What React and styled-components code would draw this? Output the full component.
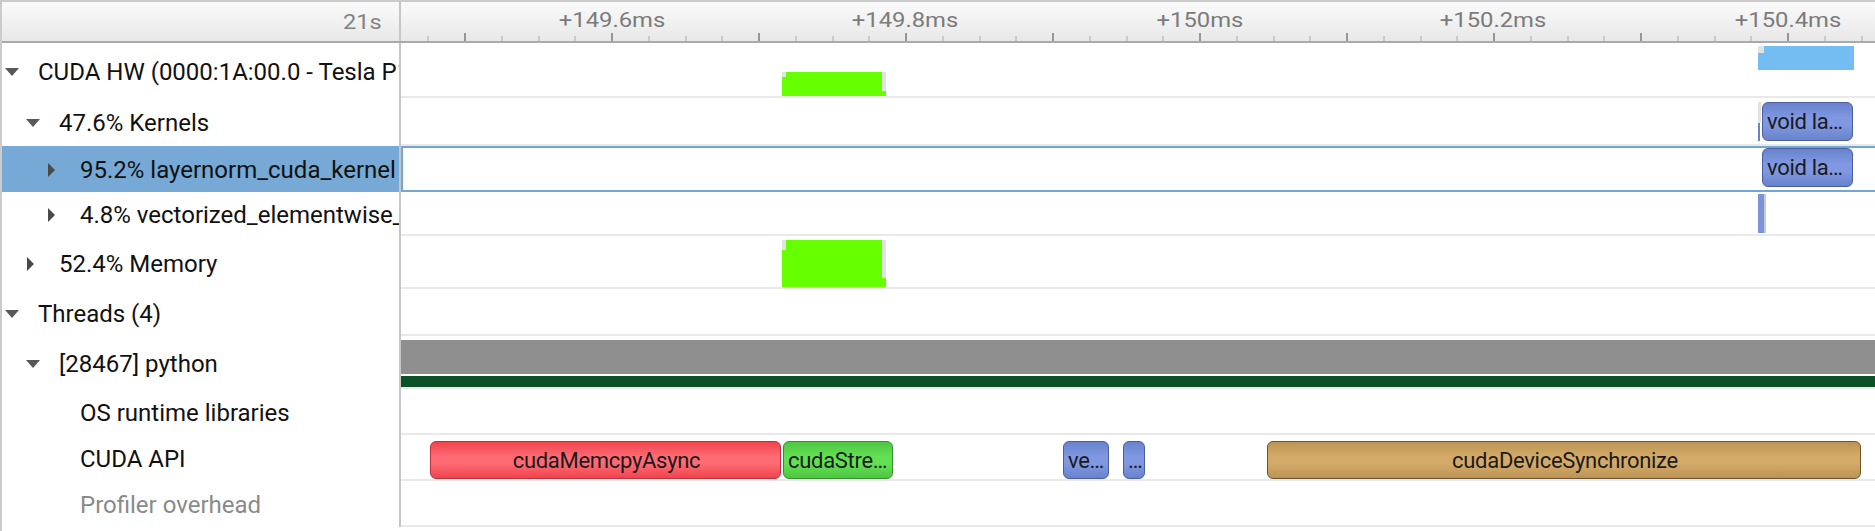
import React from "react";
import styled, { createGlobalStyle, css } from "styled-components";

const GlobalStyle = createGlobalStyle`
  html, body {
    margin: 0;
    padding: 0;
    background: #fff;
  }
  body {
    font-family: Roboto, "Noto Sans", sans-serif;
  }
`;

// track canvas starts here (absolute page x)
const TRACK_X = 401;
const px = (abs) => abs - TRACK_X;

const Frame = styled.div`
  width: 1875px;
  height: 531px;
  box-sizing: border-box;
  border-top: 2px solid #cbcbcb;
  border-left: 2px solid #cbcbcb;
  overflow: hidden;
  display: flex;
  flex-direction: column;
`;

const HeaderRow = styled.div`
  display: grid;
  grid-template-columns: 399px 1fr;
  height: 41px;
  flex-shrink: 0;
  box-sizing: border-box;
  border-bottom: 2px solid #a9a9a9;
  background: linear-gradient(#fafafa, #e8e8e8);
`;

const Corner = styled.div`
  display: flex;
  align-items: center;
  justify-content: flex-end;
  padding-right: 17px;
  border-right: 2px solid #c6c6c6;
  color: #838383;
  font-size: 20px;

  span {
    display: inline-block;
    transform: scaleX(1.18);
    transform-origin: right center;
  }
`;

const Ruler = styled.div`
  position: relative;
  overflow: hidden;
`;

const Tick = styled.div`
  position: absolute;
  bottom: 0;
  width: 2px;
  height: ${(p) => (p.$major ? 8 : 5)}px;
  background: ${(p) => (p.$major ? "#979797" : "#cacaca")};
`;

const TimeLabel = styled.div`
  position: absolute;
  top: 8px;
  font-size: 20px;
  line-height: 20px;
  color: #7b7b7b;
  white-space: nowrap;
  transform: translateX(-50%) scaleX(1.19);
`;

const Row = styled.div`
  display: grid;
  grid-template-columns: 399px 1fr;
  height: ${(p) => p.$h}px;
  flex-shrink: 0;
`;

const Label = styled.div`
  display: flex;
  align-items: center;
  box-sizing: border-box;
  padding-left: ${(p) => 3 + p.$level * 21}px;
  padding-top: 2px;
  border-right: 2px solid #c6c6c6;
  background: ${(p) => (p.$selected ? "#76a9d5" : "#fff")};
  color: ${(p) => (p.$muted ? "#8a8a8a" : "#111")};
  font-size: 24px;
  white-space: nowrap;
  overflow: hidden;
`;

const ArrowSlot = styled.span`
  width: 33px;
  flex-shrink: 0;
  display: flex;
  align-items: center;
`;

const Tri = styled.span`
  width: 0;
  height: 0;
  ${(p) =>
    p.$dir === "down"
      ? css`
          border-left: 7.5px solid transparent;
          border-right: 7.5px solid transparent;
          border-top: 8px solid #585858;
        `
      : css`
          margin-left: 1px;
          border-top: 7px solid transparent;
          border-bottom: 7px solid transparent;
          border-left: 7px solid #4a4a4a;
        `}
`;

const Track = styled.div`
  position: relative;
  overflow: hidden;
  box-sizing: border-box;
  ${(p) =>
    p.$selected
      ? css`
          box-shadow: inset 2px 2px 0 #72a6d3, inset 0 -2px 0 #72a6d3;
        `
      : css`
          border-bottom: 2px solid #e9e9e9;
        `}
`;

const Bar = styled.div`
  position: absolute;
  background: ${(p) => p.$color};
`;

const tones = {
  red: { light: "#ff6b73", dark: "#f0434d", border: "#b8333b" },
  green: { light: "#63e053", dark: "#4dc641", border: "#3a8e30" },
  blue: { light: "#7f98e1", dark: "#6882cc", border: "#4b5fa0" },
  gold: { light: "#d4aa68", dark: "#bb9453", border: "#6d5430" },
};

const Slice = styled.div`
  position: absolute;
  box-sizing: border-box;
  padding: 0 2px 0 4px;
  border: 1px solid ${(p) => tones[p.$tone].border};
  border-radius: 6px;
  background: linear-gradient(
    to bottom,
    ${(p) => tones[p.$tone].dark} 0%,
    ${(p) => tones[p.$tone].light} 40%,
    ${(p) => tones[p.$tone].light} 60%,
    ${(p) => tones[p.$tone].dark} 100%
  );
  color: #1a1a20;
  font-size: 22px;
  letter-spacing: -0.3px;
  white-space: nowrap;
  overflow: hidden;
  display: flex;
  align-items: center;
  justify-content: ${(p) => (p.$fits ? "center" : "flex-start")};

  span {
    overflow: hidden;
    text-overflow: ellipsis;
  }
`;

const GREY = "#e2e2e2";
const LIME = "#66ff00";

const gpuBlock = (top, h) => [
  { kind: "bar", color: GREY, l: 782, r: 886, top, h },
  { kind: "bar", color: LIME, l: 786, r: 882, top, h },
  { kind: "bar", color: LIME, l: 782, r: 786, top: top + Math.round(h * 0.2), h: h - Math.round(h * 0.2) },
  { kind: "bar", color: LIME, l: 882, r: 886, top: top + h - Math.round(h * 0.2), h: Math.round(h * 0.2) },
];

const rows = [
  {
    h: 55,
    level: 0,
    arrow: "down",
    label: "CUDA HW (0000:1A:00.0 - Tesla P100-PCIE-16GB)",
    items: [
      ...gpuBlock(29, 24),
      { kind: "bar", color: GREY, l: 1758, r: 1764, top: 3, h: 7 },
      { kind: "bar", color: "#74bdf2", l: 1764, r: 1854, top: 3, h: 24 },
      { kind: "bar", color: "#74bdf2", l: 1758, r: 1764, top: 10, h: 17 },
    ],
  },
  {
    h: 48,
    level: 1,
    arrow: "down",
    label: "47.6% Kernels",
    items: [
      { kind: "bar", color: GREY, l: 1758, r: 1761, top: 4, h: 21 },
      { kind: "bar", color: "#6b83c8", l: 1758, r: 1760, top: 25, h: 18 },
      { kind: "slice", tone: "blue", l: 1762, r: 1853, top: 4, h: 39, text: "void layer_norm_kernel" },
    ],
  },
  {
    h: 46,
    level: 2,
    arrow: "right",
    selected: true,
    label: "95.2% layernorm_cuda_kernel",
    items: [
      { kind: "slice", tone: "blue", l: 1762, r: 1853, top: 2, h: 39, text: "void layer_norm_kernel" },
    ],
  },
  {
    h: 44,
    level: 2,
    arrow: "right",
    label: "4.8% vectorized_elementwise_kernel",
    items: [
      { kind: "bar", color: "#7b93d9", l: 1758, r: 1764, top: 2, h: 39 },
      { kind: "bar", color: "#c9c9c9", l: 1764, r: 1766, top: 2, h: 39 },
    ],
  },
  {
    h: 53,
    level: 1,
    arrow: "right",
    label: "52.4% Memory",
    items: gpuBlock(4, 48),
  },
  { h: 47, level: 0, arrow: "down", label: "Threads (4)", items: [] },
  {
    h: 53,
    level: 1,
    arrow: "down",
    label: "[28467] python",
    items: [
      { kind: "bar", color: "#8f8f8f", l: 401, r: 1875, top: 4, h: 34 },
      { kind: "bar", color: "#0b5027", l: 401, r: 1875, top: 40, h: 12 },
    ],
  },
  { h: 46, level: 2, label: "OS runtime libraries", items: [] },
  {
    h: 46,
    level: 2,
    label: "CUDA API",
    items: [
      { kind: "slice", tone: "red", l: 430, r: 781, top: 6, h: 38, text: "cudaMemcpyAsync", fits: true },
      { kind: "slice", tone: "green", l: 783, r: 893, top: 6, h: 38, text: "cudaStreamSynchronize" },
      { kind: "slice", tone: "blue", l: 1063, r: 1109, top: 6, h: 38, text: "vectorized_elementwise_kernel" },
      { kind: "slice", tone: "blue", l: 1123, r: 1145, top: 6, h: 38, text: "…", fits: true },
      { kind: "slice", tone: "gold", l: 1267, r: 1861, top: 6, h: 38, text: "cudaDeviceSynchronize", fits: true },
    ],
  },
  { h: 46, level: 2, label: "Profiler overhead", muted: true, items: [] },
];

// 0.1 ms = 147 px, +149.6ms sits at x = 612
const MINOR = 36.75;
const ticks = [];
for (let k = 0; 428.25 + k * MINOR < 1875; k++) {
  ticks.push({ x: 428.25 + k * MINOR, major: (k - 1) % 4 === 0 });
}
const labels = [
  { x: 612, text: "+149.6ms" },
  { x: 905, text: "+149.8ms" },
  { x: 1200, text: "+150ms" },
  { x: 1493, text: "+150.2ms" },
  { x: 1788, text: "+150.4ms" },
];

function TrackItem({ item }) {
  const geo = { left: px(item.l), top: item.top, width: item.r - item.l, height: item.h };
  if (item.kind === "bar") return <Bar $color={item.color} style={geo} />;
  return (
    <Slice $tone={item.tone} $fits={item.fits} style={geo}>
      <span>{item.text}</span>
    </Slice>
  );
}

export default function App() {
  return (
    <>
      <GlobalStyle />
      <Frame>
        <HeaderRow>
          <Corner>
            <span>21s</span>
          </Corner>
          <Ruler>
            {ticks.map((t, i) => (
              <Tick key={i} $major={t.major} style={{ left: Math.round(px(t.x)) - 1 }} />
            ))}
            {labels.map((l) => (
              <TimeLabel key={l.text} style={{ left: px(l.x) }}>
                {l.text}
              </TimeLabel>
            ))}
          </Ruler>
        </HeaderRow>

        {rows.map((r, i) => (
          <Row key={i} $h={r.h}>
            <Label $level={r.level} $selected={r.selected} $muted={r.muted}>
              <ArrowSlot>{r.arrow && <Tri $dir={r.arrow} />}</ArrowSlot>
              {r.label}
            </Label>
            <Track $selected={r.selected}>
              {r.items.map((it, j) => (
                <TrackItem key={j} item={it} />
              ))}
            </Track>
          </Row>
        ))}
      </Frame>
    </>
  );
}
